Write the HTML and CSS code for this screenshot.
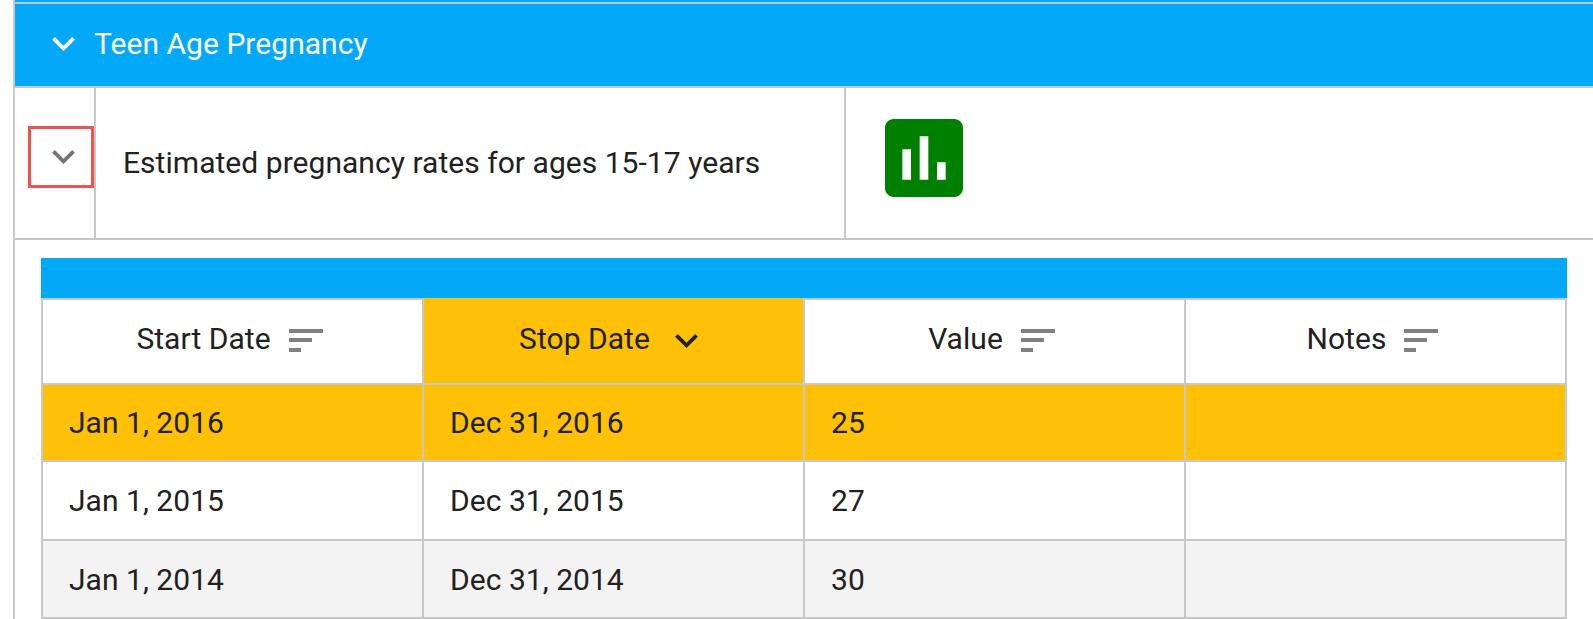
FILE: index.html
```html
<!DOCTYPE html>
<html lang="en">
<head>
<meta charset="utf-8">
<title>Teen Age Pregnancy</title>
<link rel="stylesheet" href="styles.css">
</head>
<body>
<main class="panel">
  <div class="panel-prev"></div>
  <header class="panel-head">
    <svg class="chev-head" viewBox="6 8.59 12 7.41"><path d="M7.41 8.59L12 13.17l4.59-4.58L18 10l-6 6-6-6 1.41-1.41z" /></svg>
    <span class="panel-title">Teen Age Pregnancy</span>
  </header>
  <section class="measure">
    <div class="measure-toggle">
      <button class="toggle-btn" type="button"><svg class="chev-toggle" viewBox="6 8.59 12 7.41"><path d="M7.41 8.59L12 13.17l4.59-4.58L18 10l-6 6-6-6 1.41-1.41z" /></svg></button>
    </div>
    <div class="measure-name">Estimated pregnancy rates for ages 15-17 years</div>
    <div class="measure-chart">
      <svg class="chart-icon" viewBox="3 3 18 18"><path d="M19 3H5c-1.100 0-2 .9-2 2v14c0 1.100.9 2 2 2h14c1.100 0 2-.9 2-2V5c0-1.100-.9-2-2-2zM9 17H7v-7h2v7zm4 0h-2V7h2v10zm4 0h-2v-4h2v4z" /></svg>
    </div>
  </section>
  <section class="detail">
    <div class="detail-bar"></div>
    <div class="grid">
      <div class="cell head">Start Date<svg class="sort" viewBox="0 0 34 23"><path d="M0 0h34v4H0zM0 9h23v4H0zM0 19h12v4H0z" /></svg></div>
      <div class="cell head active">Stop Date<svg class="sort-down" viewBox="6 8.59 12 7.41"><path d="M7.41 8.59L12 13.17l4.59-4.58L18 10l-6 6-6-6 1.41-1.41z" /></svg></div>
      <div class="cell head">Value<svg class="sort" viewBox="0 0 34 23"><path d="M0 0h34v4H0zM0 9h23v4H0zM0 19h12v4H0z" /></svg></div>
      <div class="cell head">Notes<svg class="sort" viewBox="0 0 34 23"><path d="M0 0h34v4H0zM0 9h23v4H0zM0 19h12v4H0z" /></svg></div>

      <div class="cell hl">Jan 1, 2016</div>
      <div class="cell hl">Dec 31, 2016</div>
      <div class="cell hl">25</div>
      <div class="cell hl"></div>

      <div class="cell">Jan 1, 2015</div>
      <div class="cell">Dec 31, 2015</div>
      <div class="cell">27</div>
      <div class="cell"></div>

      <div class="cell alt">Jan 1, 2014</div>
      <div class="cell alt">Dec 31, 2014</div>
      <div class="cell alt">30</div>
      <div class="cell alt"></div>
    </div>
  </section>
</main>
</body>
</html>
```
FILE: styles.css
```css
* { box-sizing: border-box; }
html, body { margin: 0; padding: 0; background: #fff; }
body {
  width: 1593px;
  height: 619px;
  overflow: hidden;
  font-family: Roboto, "Liberation Sans", sans-serif;
  color: #212121;
  font-size: 30px;
  letter-spacing: .04px;
}
.panel {
  margin-left: 13px;
  border-left: 2px solid #c8c8c8;
}
.panel-prev { height: 2px; background: #03a9f6; }
.panel-head {
  display: flex;
  align-items: center;
  height: 86px;
  border-top: 2px solid #c8c8c8;
  border-bottom: 2px solid #c8c8c8;
  background: #03a9f6;
  color: #fff;
  padding-left: 37px;
  gap: 19px;
}
.panel-title { padding-bottom: 3px; }
.chev-head { width: 23px; height: 14px; flex: none; margin-bottom: 3px; fill: #fff; }
.measure {
  display: grid;
  grid-template-columns: 81px 750px 1fr;
  height: 152px;
  border-bottom: 2px solid #c8c8c8;
}
.measure-toggle {
  display: flex;
  align-items: center;
  justify-content: flex-end;
  border-right: 2px solid #c8c8c8;
  padding-bottom: 12px;
}
.toggle-btn {
  display: flex;
  align-items: center;
  justify-content: center;
  width: 66px;
  height: 62px;
  padding: 0 0 0 4px;
  background: none;
  border: 3px solid #ef5350;
}
.chev-toggle { width: 23px; height: 14px; flex: none; fill: #757575; }
.measure-name {
  display: flex;
  align-items: center;
  padding: 0 0 2px 27px;
  border-right: 2px solid #c8c8c8;
}
.measure-chart { display: flex; align-items: center; padding-left: 39px; padding-bottom: 10px; }
.chart-icon { width: 78px; height: 78px; fill: #008000; }
.detail { padding: 18px 26px 0 26px; }
.detail-bar { height: 40px; background: #03a9f6; }
.grid {
  display: grid;
  grid-template-columns: 383px 381px 381px 381px;
  grid-template-rows: 87px 77px 79px 78px;
}
.cell {
  display: flex;
  align-items: center;
  padding-left: 26px;
  border-right: 2px solid #c8c8c8;
  border-bottom: 2px solid #c8c8c8;
}
.cell:nth-child(4n+1) { border-left: 2px solid #c8c8c8; }
.head {
  justify-content: center;
  padding: 0 6px 6px 0;
  border-top: 2px solid #c8c8c8;
}
.active { background: #ffc107; border-top: 0; padding: 2px 10px 6px 0; }
.hl { background: #ffc107; }
.alt { background: #f3f3f3; }
.sort { width: 34px; height: 23px; flex: none; margin-left: 18px; margin-top: 4px; fill: #808080; }
.sort-down { width: 23px; height: 14px; flex: none; margin-left: 25px; margin-top: 5px; fill: #212121; }
```
